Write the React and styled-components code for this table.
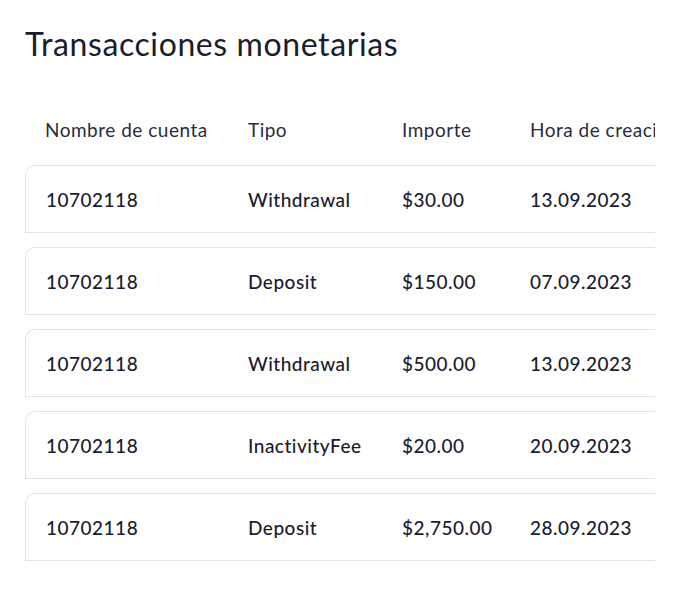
import React from "react";
import styled, { createGlobalStyle } from "styled-components";

const GlobalStyle = createGlobalStyle`
  body {
    margin: 0;
    background: #ffffff;
    font-family: Lato, "Noto Sans", sans-serif;
    color: #1b1c2d;
  }
`;

const transactions = [
  { account: "10702118", type: "Withdrawal", amount: "$30.00", date: "13.09.2023" },
  { account: "10702118", type: "Deposit", amount: "$150.00", date: "07.09.2023" },
  { account: "10702118", type: "Withdrawal", amount: "$500.00", date: "13.09.2023" },
  { account: "10702118", type: "InactivityFee", amount: "$20.00", date: "20.09.2023" },
  { account: "10702118", type: "Deposit", amount: "$2,750.00", date: "28.09.2023" },
];

const App = () => {
  return (
    <>
      <GlobalStyle />
      <Page>
        <Title>Transacciones monetarias</Title>
        <TableWrap>
          <Table>
            <colgroup>
              <col style={{ width: 223 }} />
              <col style={{ width: 154 }} />
              <col style={{ width: 128 }} />
              <col style={{ width: 200 }} />
            </colgroup>
            <thead>
              <tr>
                <HeadCell>Nombre de cuenta</HeadCell>
                <HeadCell>Tipo</HeadCell>
                <HeadCell>Importe</HeadCell>
                <HeadCell>Hora de creación</HeadCell>
              </tr>
            </thead>
            <tbody>
              {transactions.map((t, i) => (
                <tr key={i}>
                  <Cell>{t.account}</Cell>
                  <Cell>{t.type}</Cell>
                  <Cell>{t.amount}</Cell>
                  <Cell>{t.date}</Cell>
                </tr>
              ))}
            </tbody>
          </Table>
        </TableWrap>
      </Page>
    </>
  );
};

export default App;

const Page = styled.div`
  padding: 24px 0 0 25px;
  width: 630px;
`;

const Title = styled.h1`
  margin: 0;
  font-size: 32px;
  line-height: 40px;
  font-weight: 400;
  color: #1b1c2d;
  letter-spacing: 0.6px;
`;

const TableWrap = styled.div`
  margin-top: 29px;
  overflow: hidden;
`;

const Table = styled.table`
  table-layout: fixed;
  width: 705px;
  border-collapse: separate;
  border-spacing: 0 14px;
  margin: 0;
  font-size: 19px;
  letter-spacing: 0.5px;
`;

const HeadCell = styled.th`
  height: 44px;
  padding: 0;
  text-align: left;
  font-weight: 400;
  color: #2a2b3a;
  white-space: nowrap;
  overflow: hidden;

  &:first-child {
    padding-left: 20px;
  }
`;

const Cell = styled.td`
  height: 66px;
  padding: 0;
  border-top: 1px solid #e4e4e6;
  border-bottom: 1px solid #e4e4e6;
  font-weight: 500;
  color: #1b1c2d;
  white-space: nowrap;

  &:first-child {
    padding-left: 20px;
    border-left: 1px solid #e4e4e6;
    border-top-left-radius: 10px;
  }
`;
